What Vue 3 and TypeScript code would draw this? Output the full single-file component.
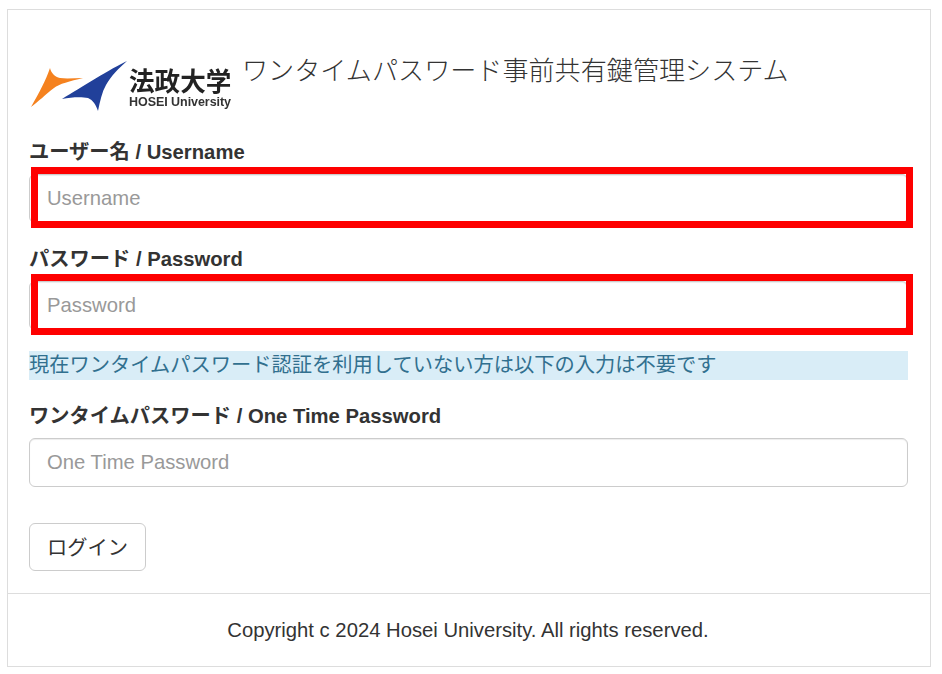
<script setup lang="ts">
const copyright = 'Copyright c 2024 Hosei University. All rights reserved.'
</script>

<template>
  <div class="page">
    <div class="card">
      <div class="body">
        <div class="head">
          <div class="logo">
            <svg class="mark" width="98" height="52" viewBox="0 0 98 52">
              <path d="M1 47 C9 33 16 20 20 8 C21 13 25 17 30 18 C37 19 45 18 53 18 C40 21 29 24 24 28 C16 34 8 42 1 47 Z" fill="#f5821f" />
              <path d="M97 1 C82 8 50 28 32 39 C42 37 52 37 58 38 C63 40 66 45 68 51 C70 41 72 32 76 25 C81 16 89 8 97 1 Z" fill="#21409a" />
            </svg>
            <div class="wordmark">
              <span class="jp">法政大学</span>
              <span class="en">HOSEI University</span>
            </div>
          </div>
          <h1 class="title">ワンタイムパスワード事前共有鍵管理システム</h1>
        </div>

        <label class="label first">ユーザー名 / Username</label>
        <div class="flagged">
          <input class="field" type="text" placeholder="Username" />
          <span class="red-box"></span>
        </div>

        <label class="label second">パスワード / Password</label>
        <div class="flagged">
          <input class="field" type="password" placeholder="Password" />
          <span class="red-box"></span>
        </div>

        <div class="notice">現在ワンタイムパスワード認証を利用していない方は以下の入力は不要です</div>

        <label class="label third">ワンタイムパスワード / One Time Password</label>
        <input class="field" type="text" placeholder="One Time Password" />

        <button class="login" type="button">ログイン</button>
      </div>
      <div class="foot">{{ copyright }}</div>
    </div>
  </div>
</template>

<style scoped>
.page {
  padding: 9px 11px 6px 7px;
  font-family: "Liberation Sans", "Noto Sans CJK JP", sans-serif;
  color: #333;
  font-size: 20.25px;
  box-sizing: border-box;
}
.card {
  border: 1px solid #ddd;
  height: 658px;
  box-sizing: border-box;
  display: flex;
  flex-direction: column;
}
.body {
  height: 583px;
  box-sizing: border-box;
  padding: 50px 22px 0 21px;
  display: flex;
  flex-direction: column;
  align-items: flex-start;
}
.head {
  display: flex;
  align-items: flex-start;
  height: 77px;
}
.logo {
  display: flex;
  align-items: flex-start;
  width: 212px;
  margin-left: 1px;
  filter: blur(0.35px);
}
.mark {
  flex: none;
}
.wordmark {
  display: flex;
  flex-direction: column;
  margin-left: 1px;
  margin-top: 9px;
  color: #222;
}
.jp {
  font-size: 25.6px;
  line-height: 27px;
  font-weight: 700;
  white-space: nowrap;
}
.en {
  font-size: 12.5px;
  line-height: 12px;
  font-weight: 700;
  letter-spacing: -0.05px;
  white-space: nowrap;
  color: #333;
}
.title {
  margin: -5px 0 0;
  font-size: 26.1px;
  line-height: 28px;
  font-weight: 300;
  white-space: nowrap;
  font-family: "Noto Sans CJK JP", sans-serif;
  color: #333;
}
.label {
  display: block;
  font-weight: 700;
  line-height: 28px;
  white-space: nowrap;
}
.first {
  margin-top: 1px;
  margin-bottom: 8px;
}
.second {
  margin-top: 22px;
  margin-bottom: 8px;
}
.third {
  margin-top: 22px;
  margin-bottom: 8px;
}
.flagged {
  position: relative;
  width: 100%;
}
.field {
  display: block;
  width: 100%;
  height: 49px;
  box-sizing: border-box;
  padding: 8px 17px;
  border: 1px solid #ccc;
  border-radius: 6px;
  background: #fff;
  font: inherit;
  color: #555;
  outline: none;
  box-shadow: inset 0 1px 1px rgba(0, 0, 0, 0.075);
}
.field::placeholder {
  color: #999;
  opacity: 1;
}
.red-box {
  position: absolute;
  left: 2px;
  right: -5px;
  top: -7px;
  height: 61px;
  box-sizing: border-box;
  border: 7px solid #fe0000;
  pointer-events: none;
}
.notice {
  width: 100%;
  height: 29px;
  margin-top: 21px;
  background: #d9edf7;
  color: #31708f;
  line-height: 29px;
  white-space: nowrap;
}
.login {
  margin-top: 36px;
  width: 117px;
  height: 48px;
  box-sizing: border-box;
  padding: 0 0 2px;
  background: #fff;
  border: 1px solid #ccc;
  border-radius: 6px;
  font: inherit;
  color: #333;
}
.foot {
  border-top: 1px solid #ddd;
  flex: 1;
  display: flex;
  align-items: center;
  justify-content: center;
  padding-right: 2px;
  color: #333;
}
</style>
